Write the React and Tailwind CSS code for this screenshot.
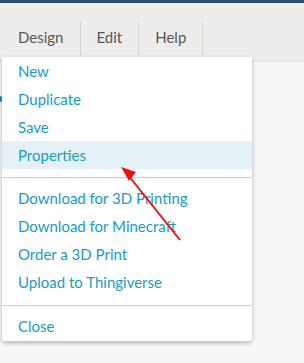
import React from "react";

const items1 = ["New", "Duplicate", "Save", "Properties"];
const items2 = ["Download for 3D Printing", "Download for Minecraft", "Order a 3D Print", "Upload to Thingiverse"];

function Item({ label, active }) {
  return (
    <div className={"h-[28px] flex items-center pl-4 text-[15px] text-[#1b9bc0] " + (active ? "bg-[#e4f1f7]" : "")}>
      {label}
    </div>
  );
}

export default function App() {
  return (
    <div className="relative w-[304px] h-[363px] overflow-hidden bg-[#f8f8f8]" style={{ fontFamily: "Lato, 'Open Sans', sans-serif" }}>
      <div className="h-[3px] bg-[#2c4a6c]" />
      <div className="h-[59px] bg-[#eeedeb] border-b border-[#e4e3e1] flex items-start pt-[19px] pl-[2px]">
        {["Design", "Edit", "Help"].map((t) => (
          <div key={t} className="h-[34px] px-4 pb-[3px] flex items-center border-r border-[#d6d4d1] text-[15px] text-[#575757]">
            {t}
          </div>
        ))}
      </div>
      <div className="absolute left-[-3px] top-[96px] w-[6px] h-[6px] rounded-full bg-[#1b9bc0]" />
      <div className="absolute left-[2px] top-[57px] w-[250px] bg-white rounded-b-[3px] shadow-[0_2px_5px_rgba(0,0,0,0.28)]">
        {items1.map((t) => (
          <Item key={t} label={t} active={t === "Properties"} />
        ))}
        <div className="mt-2 mb-[6px] h-px bg-[#cfcdca]" />
        {items2.map((t) => (
          <Item key={t} label={t} />
        ))}
        <div className="mt-[9px] mb-[6px] h-px bg-[#cfcdca]" />
        <Item label="Close" />
        <div className="h-px" />
      </div>
      <svg className="absolute left-0 top-0" width="304" height="363" viewBox="0 0 304 363">
        <line x1="180" y1="240" x2="128" y2="175" stroke="#f01010" strokeWidth="2" />
        <polygon points="121,167 136,172 129,181" fill="#f01010" />
      </svg>
    </div>
  );
}
